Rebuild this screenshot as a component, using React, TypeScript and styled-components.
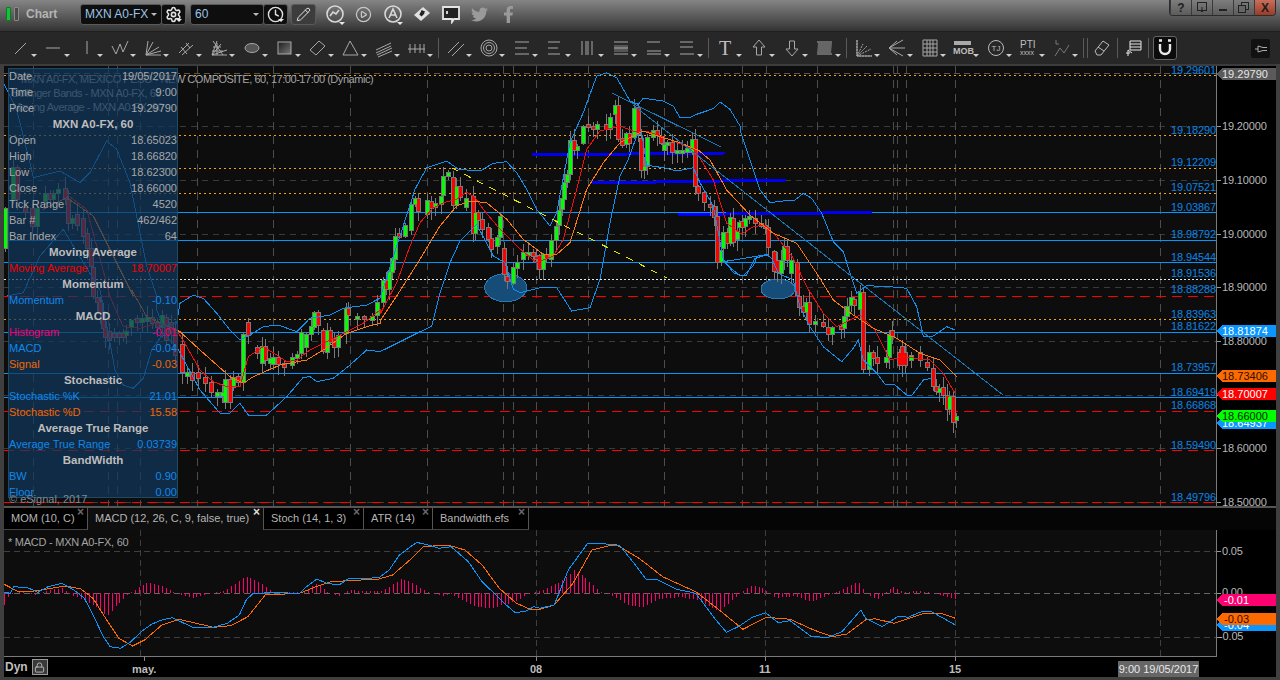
import React from "react";
import styled, { createGlobalStyle } from "styled-components";
import { Settings, Clock, Pencil, CirclePlay, Lock } from "lucide-react";
import { FaTwitter, FaFacebookF } from "react-icons/fa";

const Global = createGlobalStyle`
  html, body { margin: 0; padding: 0; background: #3c3c3c; overflow: hidden; }
  body { font-family: "Liberation Sans", Arial, sans-serif; }
`;

/* ---------- data ---------- */
type Z = [number, number, number, number];
const zm = (list: Z[], ox: number, oy: number, sy = 3) =>
  list.map(([x, a, b, g]) => [Math.round(ox + x / 3), Math.round(oy + a / sy), Math.round(oy + b / sy), g] as Z);

const candles: Z[] = [
  ...zm([[15,430,545,1],[40,305,400,1],[50,305,400,0],[75,425,437,0],[95,430,480,0],[110,430,480,1],[135,385,405,1],[150,385,400,0],[160,388,400,1],[175,372,382,1],[195,370,400,0],[205,402,472,0],[215,460,472,1],[232,448,478,0],[250,460,510,0],[262,505,545,0],[272,550,600,0],[280,605,690,0]], 0, 66),
  ...zm([[290,25,35,0],[300,35,70,0],[308,70,115,0],[315,115,140,0],[328,125,150,0],[343,133,140,0],[358,133,140,0],[370,133,140,0],[378,125,135,1],[393,92,110,1],[410,88,95,0],[425,88,95,1],[440,85,92,1],[455,85,100,0],[470,98,112,0],[485,78,110,1],[498,85,150,0],[512,100,125,0],[525,130,195,0],[545,165,245,0],[560,250,258,1],[575,250,270,0],[595,250,265,0],[615,265,280,0],[632,280,305,0],[650,310,318,1],[665,310,318,1],[675,270,335,1],[690,270,335,0],[700,265,290,1],[715,262,275,0],[730,135,275,1],[745,100,135,0],[770,175,190,0],[785,170,220,1],[795,172,210,0],[810,208,220,1],[820,203,222,1],[835,205,222,0],[852,222,230,0],[875,205,225,1],[892,195,205,1],[902,130,190,1],[918,135,172,1],[932,112,132,1],[942,70,110,1],[955,70,105,0],[968,122,182,0],[980,122,185,1],[990,122,155,0],[1003,148,172,0],[1015,138,172,1],[1037,58,130,1],[1045,58,75,0],[1070,80,88,1],[1092,80,88,0],[1115,80,90,1],[1130,38,75,1]], 0, 290),
  ...zm([[10,645,708,1],[17,645,670,0],[28,618,670,1],[37,580,618,1],[46,512,578,1],[58,505,512,0],[76,480,510,1],[94,418,492,1],[105,398,415,1],[115,398,435,0],[142,405,445,1],[152,408,425,0],[165,415,422,1],[182,392,415,1],[190,332,388,1],[205,322,330,1],[218,335,418,0],[228,362,418,1],[240,362,392,0],[257,398,422,1],[278,392,500,0],[286,440,500,1],[295,440,462,0],[305,462,490,0],[325,485,520,0],[333,520,548,0],[352,515,540,1],[361,452,512,1],[372,548,625,0],[382,632,645,0],[400,605,650,1],[410,590,605,1],[430,560,580,1],[445,560,565,1],[458,560,570,0],[468,572,580,0],[478,570,610,0],[488,568,610,1],[498,568,575,0],[514,525,580,1],[527,482,522,1],[536,435,478,1],[545,400,430,1],[553,350,398,1],[562,328,348,1],[571,226,325,1],[583,226,252,0],[592,242,252,1],[610,182,230,1],[625,178,182,0],[638,182,190,0],[650,178,188,1],[677,178,190,0],[690,155,190,1],[705,120,145,1],[715,120,218,0],[725,220,238,0],[737,205,235,1],[746,205,232,0],[762,128,212,1],[773,125,205,0],[782,218,312,0],[793,302,312,1],[800,215,300,1],[820,195,212,1],[830,195,208,0],[842,212,230,0],[852,238,252,1],[862,232,238,1],[877,232,258,0],[890,255,260,1],[905,255,260,1],[920,250,258,1],[935,222,258,1]], 380, 66),
  ...zm([[15,30,168,0],[25,172,188,0],[43,190,215,0],[60,225,230,0],[73,232,262,0],[82,262,395,0],[92,362,395,1],[100,310,355,1],[110,310,340,0],[120,265,338,1],[130,268,335,0],[140,305,328,1],[148,278,290,1],[155,275,290,0],[166,268,288,1],[178,262,268,1],[195,268,278,0],[212,282,288,0],[225,288,295,0],[235,295,352,0],[252,365,422,0],[262,392,425,0],[272,392,430,1],[282,350,390,1],[292,350,390,0],[302,392,430,1],[320,398,495,0],[328,500,532,0],[340,530,545,0],[349,520,545,1],[358,520,582,0],[376,575,580,1],[398,578,588,0],[415,595,612,0],[425,595,612,1],[452,592,598,0],[463,562,595,1],[472,530,558,1],[482,505,525,1],[492,510,525,0],[510,490,538,1],[520,490,718,0],[538,668,716,1],[550,668,685,0],[560,685,698,0],[587,685,695,1],[598,615,682,1],[607,602,618,0],[627,670,705,0],[635,652,705,0],[645,668,705,0],[663,678,690,1],[690,668,690,0],[712,700,712,0],[730,718,768,0],[738,770,782,0],[748,778,785,1],[760,775,795,0],[770,798,838,0],[778,802,838,1],[788,802,875,0],[797,860,870,1]], 690, 130),
];

const pts = (list: number[][], ox: number, oy: number, sx = 3, sy = 3) =>
  list.map(([x, y]) => `${(ox + x / sx).toFixed(1)},${(oy + y / sy).toFixed(1)}`).join(" ");

const upperBand =
  pts([[10,50],[50,130],[90,290],[100,335],[180,315],[240,350],[270,320],[320,225],[350,250],[390,350],[440,600],[470,690]], 0, 66) + " " +
  pts([[470,60],[490,110],[530,100],[540,40],[580,15],[610,25],[650,70],[690,120],[720,150],[750,135],[790,110],[835,105],[890,125],[930,85],[990,75],[1030,55],[1100,45],[1140,25]], 0, 290) + " " +
  pts([[105,370],[140,305],[200,285],[235,310],[300,315],[340,292],[380,287],[410,320],[440,370],[470,430],[510,480],[530,440],[570,230],[610,140],[650,30],[680,20],[710,35],[750,105],[775,115],[790,97],[850,105],[880,120],[900,155],[930,155],[950,145],[1000,128],[1020,108],[1050,130],[1080,180]], 380, 66) + " " +
  pts([[150,0],[170,60],[190,120],[210,180],[240,218],[300,210],[315,210],[340,190],[365,205],[395,250],[430,335],[460,365],[480,430],[500,490],[530,467],[600,470],[650,475],[680,530],[700,618],[730,618],[770,590],[795,600]], 690, 130);

const lowerBand =
  pts([[20,690],[70,680],[120,570],[190,490]], 0, 66) + " " +
  pts([[300,0],[325,130],[345,240],[370,285],[400,295],[430,265],[455,180],[490,130],[530,170],[600,300],[660,370],[690,370],[720,340],[745,375],[800,375],[860,320],[910,262],[930,260],[950,275],[1000,265],[1050,225],[1100,180],[1140,185]], 0, 290) + " " +
  pts([[155,780],[180,680],[210,590],[240,525],[290,475],[340,570],[375,590],[400,670],[420,680],[480,665],[530,665],[575,735],[630,725],[660,640],[690,470],[720,330],[745,280],[770,210],[785,200],[800,298],[850,305],[890,315],[940,305],[960,350],[1000,420],[1030,580],[1060,620],[1090,630],[1120,600],[1130,575],[1165,565]], 380, 66) + " " +
  pts([[100,395],[150,438],[170,435],[195,385],[230,375],[245,385],[265,430],[310,450],[330,530],[360,590],[400,650],[455,695],[490,655],[505,630],[520,690],[560,730],[585,762],[615,765],[650,795],[665,797],[700,750],[725,745]], 690, 130);

const redMa =
  pts([[200,385],[260,430],[290,540],[330,690]], 0, 66) + " " +
  pts([[330,20],[370,110],[420,115],[470,100],[530,120],[560,170],[600,240],[640,275],[680,290],[720,290],[745,200],[790,170],[830,195],[860,215],[890,210],[930,180],[970,160],[1030,130],[1090,100],[1140,60]], 0, 290) + " " +
  pts([[0,745],[50,650],[90,540],[120,470],[160,425],[190,410],[230,400],[260,378],[285,395],[310,430],[360,490],[410,540],[470,590],[520,570],[550,520],[590,370],[620,250],[660,195],[720,180],[760,195],[800,195],[880,225],[930,245]], 380, 66) + " " +
  pts([[15,60],[70,150],[110,280],[155,312],[190,290],[225,285],[260,320],[310,385],[350,470],[400,550],[440,590],[480,570],[510,555],[555,600],[600,690],[640,680],[720,690],[760,730],[795,790]], 690, 130);

const orangeMa =
  pts([[130,430],[200,395],[280,450],[340,570],[400,690]], 0, 66) + " " +
  pts([[395,0],[440,80],[540,125],[600,180],[690,260],[730,280],[760,260],[840,225],[920,210],[970,180],[1040,130],[1100,110],[1140,100]], 0, 290) + " " +
  pts([[0,765],[50,690],[120,580],[180,480],[230,420],[270,405],[320,410],[380,460],[430,520],[490,565],[530,565],[570,530],[620,370],[670,290],[720,230],[790,195],[850,215],[900,230],[960,255]], 380, 66) + " " +
  pts([[25,60],[60,90],[110,180],[180,255],[250,310],[320,340],[380,430],[430,510],[490,555],[550,595],[620,625],[690,670],[750,690],[800,740]], 690, 130);

const macdBlue =
  pts([[12,262],[30,265],[40,245],[80,248],[110,262],[140,245],[180,235],[215,255],[245,280],[275,340],[300,395],[320,425],[350,430],[380,410],[410,380],[440,358],[470,345],[500,338],[525,350],[560,367],[620,367],[660,355],[695,330],[715,285],[735,265],[800,263],[870,265],[890,245],[920,222],[950,235],[985,240],[1010,222],[1060,220],[1100,218],[1130,195],[1160,150],[1210,112],[1250,122],[1275,130],[1310,125],[1360,170],[1400,230],[1440,270],[1470,300],[1495,322],[1525,320],[1550,305]], 0, 505, 2.904) + " " +
  pts([[0,235],[30,225],[60,120],[100,42],[130,40],[170,48],[205,110],[225,148],[250,150],[290,178],[330,190],[370,265],[395,307],[420,290],[450,262],[478,248],[505,278],[530,272],[575,320],[610,322],[640,305],[680,240],[690,265],[725,290],[760,258],[780,262],[810,244],[830,245],[880,285]], 540, 530, 2.119);
const macdOrange =
  pts([[12,238],[50,258],[100,258],[150,250],[190,243],[235,252],[270,280],[310,345],[345,400],[385,423],[420,405],[470,360],[520,343],[570,355],[620,367],[670,362],[720,335],[770,270],[870,265],[910,248],[960,230],[1100,222],[1140,210],[1190,165],[1230,125],[1300,120],[1350,135],[1400,180],[1450,250],[1500,295],[1540,313]], 0, 505, 2.904) + " " +
  pts([[0,238],[30,225],[70,160],[110,60],[160,43],[210,85],[260,140],[330,185],[380,240],[430,298],[480,262],[530,268],[580,300],[620,320],[650,312],[690,270],[710,266],[750,280],[810,252],[850,250],[880,265]], 540, 530, 2.119);

const histKeys = [[4,-12],[9,-2],[21,2],[34,-2],[48,3],[62,5],[69,-1],[83,-7],[93,-12],[107,-23],[117,-12],[127,-2],[133,2],[148,11],[162,7],[174,1],[182,-2],[193,-5],[207,-1],[224,2],[246,17],[262,9],[272,1],[303,1],[317,10],[327,1],[339,-3],[348,3],[365,2],[382,2],[401,14],[413,10],[427,1],[441,-3],[451,-1],[475,-14],[492,-15],[517,-8],[527,-1],[540,2],[554,8],[564,14],[575,24],[587,13],[601,1],[611,-2],[630,-13],[644,-14],[658,-6],[682,-4],[700,-8],[719,-19],[733,-6],[743,2],[752,8],[764,4],[776,-5],[795,-3],[811,-9],[828,-2],[842,3],[858,12],[866,0],[877,-7],[892,6],[903,1],[917,2],[932,0],[955,-6]];
const histAt = (x: number) => {
  for (let i = 0; i < histKeys.length - 1; i++) {
    const [a, va] = histKeys[i];
    const [b, vb] = histKeys[i + 1];
    if (x >= a && x <= b) return va + ((vb - va) * (x - a)) / (b - a);
  }
  return 0;
};
const histBars: number[] = [];
for (let x = 4; x <= 955; x += 3.85) histBars.push(Math.round(x));

const seed = (i: number) => {
  const v = Math.sin(i * 12.9898) * 43758.5453;
  return v - Math.floor(v);
};

const verticals = [33, 108, 117, 140, 197, 273, 350, 427, 503, 513, 536, 588, 664, 742, 766, 817, 893, 897, 906, 955, 1160];
const gridY = [126, 180, 234, 287, 341, 395, 448, 502];
const orangeDots = [75, 135, 168, 193, 319];
const blueLines = [212, 240, 262, 332, 373, 397];
const redDashes = [296, 411, 450, 502];
const leftX = 4;
const plotR = 1216;

const levelLabels: [string, number][] = [
  ["19.29601", 74], ["19.18290", 134], ["19.12209", 166], ["19.07521", 191], ["19.03867", 211],
  ["18.98792", 238], ["18.94544", 261], ["18.91536", 277], ["18.88288", 293], ["18.83963", 318],
  ["18.81622", 330], ["18.73957", 371], ["18.69419", 396], ["18.66868", 409], ["18.59490", 449], ["18.49796", 501],
];
const axisLabels: [string, number][] = [
  ["19.20000", 130], ["19.10000", 184], ["19.00000", 238], ["18.90000", 291],
  ["18.80000", 345], ["18.60000", 452], ["18.50000", 506],
];

type Tag = { t: string; y: number; bg: string; fg: string };
const priceTags: Tag[] = [
  { t: "19.29790", y: 74, bg: "#5a5a5a", fg: "#e6e6e6" },
  { t: "18.81874", y: 331, bg: "#0a96ff", fg: "#ffffff" },
  { t: "18.73406", y: 376, bg: "#ff6a00", fg: "#2a1000" },
  { t: "18.64937", y: 423, bg: "#0a96ff", fg: "#ffffff" },
  { t: "18.70007", y: 394, bg: "#ff0000", fg: "#ffffff" },
  { t: "18.66000", y: 416, bg: "#00ff00", fg: "#002200" },
];
const macdTags: Tag[] = [
  { t: "-0.01", y: 600, bg: "#ff0070", fg: "#ffffff" },
  { t: "-0.04", y: 625, bg: "#0a96ff", fg: "#ffffff" },
  { t: "-0.03", y: 619, bg: "#ff6a00", fg: "#2a1000" },
];

type Row = { kind: "row" | "head"; l: string; v?: string; c?: string };
const rows: Row[] = [
  { kind: "row", l: "Date", v: "19/05/2017" },
  { kind: "row", l: "Time", v: "9:00" },
  { kind: "row", l: "Price", v: "19.29790" },
  { kind: "head", l: "MXN A0-FX, 60" },
  { kind: "row", l: "Open", v: "18.65023" },
  { kind: "row", l: "High", v: "18.66820" },
  { kind: "row", l: "Low", v: "18.62300" },
  { kind: "row", l: "Close", v: "18.66000" },
  { kind: "row", l: "Tick Range", v: "4520" },
  { kind: "row", l: "Bar #", v: "462/462" },
  { kind: "row", l: "Bar Index", v: "64" },
  { kind: "head", l: "Moving Average" },
  { kind: "row", l: "Moving Average", v: "18.70007", c: "#f00000" },
  { kind: "head", l: "Momentum" },
  { kind: "row", l: "Momentum", v: "-0.10", c: "#1088e8" },
  { kind: "head", l: "MACD" },
  { kind: "row", l: "Histogram", v: "-0.01", c: "#f00078" },
  { kind: "row", l: "MACD", v: "-0.04", c: "#1088e8" },
  { kind: "row", l: "Signal", v: "-0.03", c: "#f06800" },
  { kind: "head", l: "Stochastic" },
  { kind: "row", l: "Stochastic %K", v: "21.01", c: "#1088e8" },
  { kind: "row", l: "Stochastic %D", v: "15.58", c: "#f06800" },
  { kind: "head", l: "Average True Range" },
  { kind: "row", l: "Average True Range", v: "0.03739", c: "#1088e8" },
  { kind: "head", l: "BandWidth" },
  { kind: "row", l: "BW", v: "0.90", c: "#1088e8" },
  { kind: "row", l: "Floor", v: "0.00", c: "#1088e8" },
];

const tabs = [
  { t: "MOM (10, C)", w: 84 },
  { t: "MACD (12, 26, C, 9, false, true)", w: 176, on: true },
  { t: "Stoch (14, 1, 3)", w: 100 },
  { t: "ATR (14)", w: 69 },
  { t: "Bandwidth.efs", w: 96 },
];

/* ---------- styled ---------- */
const Window = styled.div`
  width: 1280px; height: 680px; display: flex; flex-direction: column;
  background: #3f3f3f; overflow: hidden;
`;
const TitleBar = styled.div`
  height: 31px; flex: none; display: flex; align-items: center; padding: 0 0 3px 6px; box-sizing: border-box;
  background: linear-gradient(#858585 0, #3d3d3d 88%, #333 100%); position: relative;
`;
const Logo = styled.div`
  width: 14px; height: 14px; display: flex; gap: 3px; margin-right: 6px;
`;
const LogoBar = styled.span<{ $on?: boolean }>`
  width: 5px; height: 14px; border-radius: 1px; box-sizing: border-box;
  background: ${(p) => (p.$on ? "#17c03a" : "#4a4a4a")};
  border: 1px solid ${(p) => (p.$on ? "#0b7d20" : "#8a8a8a")};
`;
const TitleText = styled.span`
  color: #b4b4b4; font-size: 12px; font-weight: bold; width: 54px;
`;
const Combo = styled.div<{ $w: number }>`
  width: ${(p) => p.$w}px; height: 21px; background: #0e0e0e; border: 1px solid #5a5a5a; border-radius: 3px;
  box-sizing: border-box; display: flex; align-items: center; justify-content: space-between; padding: 0 4px;
  color: #9cc4e4; font-size: 12px; flex: none;
`;
const SmallArrow = styled.span`
  width: 0; height: 0; border: 3px solid transparent; border-top: 3px solid #bbb; border-bottom: 0;
`;
const ComboBtn = styled.div<{ $light?: boolean; $arrow?: boolean }>`
  width: 25px; height: 21px; box-sizing: border-box; background: ${(p) => (p.$light ? "#3c3c3c" : "#0e0e0e")};
  border: 1px solid #5a5a5a; border-radius: 3px; display: flex; align-items: center; justify-content: center;
  color: #e2e2e2; flex: none; margin-right: 4px; margin-left: -1px; position: relative;
  &::after {
    content: ""; display: ${(p) => (p.$arrow ? "block" : "none")}; position: absolute; right: 3px; bottom: 2px;
    border: 3px solid transparent; border-top: 3px solid #e8e8e8; border-bottom: 0;
  }
`;
const BarIcon = styled.div<{ $arrow?: boolean }>`
  width: 29px; display: flex; align-items: center; justify-content: center; color: #c8c8c8; flex: none; position: relative;
  &::after {
    content: ""; display: ${(p) => (p.$arrow ? "block" : "none")}; position: absolute; right: 4px; bottom: -1px;
    border: 3px solid transparent; border-top: 3px solid #e8e8e8; border-bottom: 0;
  }
`;
const WinBtns = styled.div`
  position: absolute; right: 4px; top: 0; display: flex; height: 15px;
  border: 1px solid #2c2c2c; border-top: 0; border-radius: 0 0 4px 4px; overflow: hidden;
`;
const WinBtn = styled.div<{ $close?: boolean }>`
  width: 20px; height: 15px; display: flex; align-items: center; justify-content: center;
  font-size: 12px; font-weight: bold; color: #1d1d1d; border-left: 1px solid #3a3a3a;
  background: ${(p) => (p.$close ? "linear-gradient(#c96e5a,#9a3b2a)" : "linear-gradient(#7d7d7d,#5c5c5c)")};
`;
const DrawBar = styled.div`
  height: 33px; flex: none; box-sizing: border-box; display: flex; align-items: center; padding-left: 4px;
  background: #272727; border-top: 1px solid #1f1f1f; position: relative;
`;
const ToolBtn = styled.div<{ $noArrow?: boolean; $w?: number }>`
  width: ${(p) => p.$w ?? 33}px; height: 33px; flex: none; position: relative; display: flex; align-items: center; justify-content: center;
  color: #a8a8a8;
  &::after {
    content: ""; display: ${(p) => (p.$noArrow ? "none" : "block")}; position: absolute; left: 27px; top: 22px;
    border: 3px solid transparent; border-top: 3px solid #d0d0d0; border-bottom: 0;
  }
`;
const Sep = styled.div<{ $w?: number }>`
  width: ${(p) => p.$w ?? 6}px; height: 20px; flex: none; position: relative;
  &::before { content: ""; position: absolute; right: 0; top: 0; bottom: 0; width: 1px; background: #5a5a5a; }
`;
const Magnet = styled.div`
  width: 24px; height: 24px; margin-left: 4px; box-sizing: border-box; background: #0b0b0b; border: 1px solid #666;
  border-radius: 3px; display: flex; align-items: center; justify-content: center; flex: none;
`;
const Pin = styled.div`
  position: absolute; left: 1251px; top: 7px; width: 19px; height: 19px; background: #111; border-radius: 2px;
  display: flex; align-items: center; justify-content: center;
`;
const Divider = styled.div`
  height: 2px; flex: none; background: #3c3c3c; margin-left: 4px; margin-right: 4px;
`;
const ChartPane = styled.div`
  position: relative; height: 440px; flex: none; margin: 0 4px; background: #000; overflow: hidden;
`;
const Svg = styled.svg`
  display: block; shape-rendering: crispEdges;
`;
const TitleLines = styled.div`
  position: absolute; left: 4px; top: 6px; display: flex; flex-direction: column;
  color: #a3a3a3; font-size: 11px; line-height: 14px; white-space: nowrap; letter-spacing: -0.46px;
`;
const TitleLine = styled.span<{ $pad?: number }>`
  padding-left: ${(p) => p.$pad ?? 0}px;
`;
const DataWin = styled.div`
  position: absolute; left: 4px; top: 2px; width: 170px; height: 430px; box-sizing: border-box;
  background: rgba(18, 56, 92, 0.72); border: 1px solid #1e4a66;
  display: flex; flex-direction: column; font-size: 11px; color: #a9a9a9;
  & > :first-child { margin-top: -1px; }
`;
const DRow = styled.div<{ $c?: string }>`
  height: 16px; flex: none; display: flex; justify-content: space-between; align-items: center;
  padding: 0 0 0 0; line-height: 16px; color: ${(p) => p.$c ?? "#a9a9a9"};
`;
const DHead = styled.div`
  height: 16px; flex: none; line-height: 16px; text-align: center; font-weight: bold; color: #bdbdbd; font-size: 11.5px;
`;
const Copy = styled.div`
  position: absolute; left: 0; top: 423px; font-size: 11px; color: #7d8a95; line-height: 14px;
`;
const TabStrip = styled.div`
  height: 24px; flex: none; margin: 0 4px; background: #050505; border-top: 2px solid #555; box-sizing: border-box; display: flex;
`;
const Tab = styled.div<{ $on?: boolean; $w: number }>`
  width: ${(p) => p.$w}px; box-sizing: border-box; position: relative; flex: none; height: 22px;
  background: ${(p) => (p.$on ? "#0e0e0e" : "#000")};
  border-right: 1px solid #555; border-bottom: ${(p) => (p.$on ? "0" : "1px solid #444")};
  color: #b4b4b4; font-size: 11px; line-height: 21px; padding-left: 7px; white-space: nowrap;
`;
const TabX = styled.span<{ $on?: boolean }>`
  position: absolute; right: 3px; top: -6px; font-size: 12px; font-weight: bold; color: ${(p) => (p.$on ? "#ddd" : "#6a6a6a")};
`;
const LowerPane = styled.div`
  position: relative; height: 127px; flex: none; margin: 0 4px; background: #000;
`;
const LowerTitle = styled.div`
  position: absolute; left: 4px; top: 5px; color: #a3a3a3; font-size: 11px; line-height: 14px; letter-spacing: -0.25px;
`;
const TimeAxis = styled.div`
  position: relative; height: 20px; flex: none; margin: 0 4px; background: #000; display: flex; align-items: center;
  color: #bcbcbc; font-size: 11px; font-weight: bold;
`;
const Dyn = styled.span`
  margin-left: 1px; color: #bfbfbf; font-size: 12px; font-weight: bold;
`;
const LockBtn = styled.span`
  margin-left: 4px; width: 16px; height: 16px; box-sizing: border-box; background: #3a3a3a; border: 1px solid #999;
  display: inline-flex; align-items: center; justify-content: center; color: #bbb;
`;
const TickLabel = styled.span<{ $x: number }>`
  position: absolute; left: ${(p) => p.$x}px; top: 5px; line-height: 14px;
  &::before {
    content: ""; position: absolute; left: 50%; top: -5px; width: 1px; height: 4px; background: #888;
  }
`;
const Stamp = styled.span`
  position: absolute; left: 1114px; top: 4px; width: 81px; height: 16px; background: #666; color: #e8e8e8;
  font-size: 11px; line-height: 16px; text-align: center; font-weight: normal;
`;
const LevelText = styled.text`
  font-family: "Liberation Sans", Arial, sans-serif; font-size: 11px; fill: #0a84e6; text-anchor: end; letter-spacing: -0.1px;
`;
const AxisText = styled.text`
  font-family: "Liberation Sans", Arial, sans-serif; font-size: 11px; fill: #b8b8b8; letter-spacing: -0.15px;
`;
const TagText = styled.text`
  font-family: "Liberation Sans", Arial, sans-serif; font-size: 11px;
`;
const IconText = styled.text`
  font-family: "Liberation Sans", Arial, sans-serif; fill: #bdbdbd;
`;
const SerifT = styled.text`
  font-family: "Liberation Serif", serif; font-size: 20px; fill: #bdbdbd;
`;

/* ---------- icons ---------- */
const I: React.FC<{ children: React.ReactNode }> = ({ children }) => (
  <svg width="20" height="20" viewBox="0 0 20 20" fill="none" stroke="currentColor" strokeWidth="1">{children}</svg>
);
const Grad = () => (
  <linearGradient id="gg" x1="0" y1="0" x2="1" y2="1"><stop offset="0" stopColor="#1c1c1c" /><stop offset="1" stopColor="#777" /></linearGradient>
);
const drawTools: React.ReactNode[] = [
  <I><path d="M4 16 L15 5" /></I>,
  <I><path d="M2 10 H16" /></I>,
  <I><path d="M10 3 V16" /></I>,
  <I><path d="M2 8 L6 16 L10 6 L13 14 L18 3" /></I>,
  <I><path d="M3 17 L5 3 M3 17 L10 4 M3 17 L16 9 M3 17 L18 13 M3 17 H18" /></I>,
  <I><path d="M3 15 L13 5 M6 17 L17 7 M5 9 L11 16 M10 5 L14 10" /></I>,
  <I><path d="M4 3 L14 17 M3 17 L8 3 M3 17 L12 6 M3 17 L18 12 M3 17 H18 M4 9 H12 M3 13 L14 13 M8 5 L8 17" /></I>,
  <I><ellipse cx="10" cy="10" rx="7" ry="4.5" fill="#555" /></I>,
  <I><Grad /><rect x="3" y="4" width="13" height="12" fill="url(#gg)" /></I>,
  <I><path d="M2 12 L11 3 L17 8 L8 17 Z" /></I>,
  <I><path d="M2 17 L9 3 L17 17 Z" /></I>,
  <I><path d="M2 12 L17 5 M2 15 L17 8 M3 17 L18 10 M4 19 L18 13" /></I>,
  <I><path d="M1 11 H18 M3 6 V15 M8 6 V15 M13 6 V15 M17 6 V15" /></I>,
  null,
  <I><path d="M2 15 L13 4 M6 18 L18 6" /></I>,
  <I><circle cx="10" cy="10" r="8" /><circle cx="10" cy="10" r="5.5" /><circle cx="10" cy="10" r="3" /></I>,
  <I><path d="M3 4 H17 M3 10 H15 M3 16 H17" /></I>,
  <I><path d="M3 4 H15 M3 10 H13 M3 16 H15" /></I>,
  <I><path d="M4 3 V17 M8 3 V17 M10 3 V17 M14 3 V17" /></I>,
  <I><rect x="3" y="7" width="14" height="7" fill="#555" stroke="none" /><path d="M3 4 H17 M3 10 H17 M3 16 H17" /></I>,
  <I><path d="M3 4 H16 M3 13 H17 M3 16 H17" /></I>,
  <I><path d="M3 4 H16 M3 9 H16 M3 16 H17" /></I>,
  null,
  <svg width="20" height="20" viewBox="0 0 20 20"><SerifT x="3" y="17">T</SerifT></svg>,
  <I><path d="M10 2 L16 9 H12.5 V17 H7.5 V9 H4 Z" /></I>,
  <I><path d="M10 18 L16 11 H12.5 V3 H7.5 V11 H4 Z" /></I>,
  <I><path d="M2 4 H17 M2 16 H17" /><path d="M3 5 H17 L16 15 H2 Z" fill="#666" stroke="none" /></I>,
  null,
  <I><path d="M3 2 V18 H18 M3 18 L9 6 M3 18 L13 8 M3 18 L17 11" strokeDasharray="2 1" /><path d="M3 2 V18 H18" /></I>,
  <I><path d="M2 10 L16 2 M2 10 L18 10 M2 10 L16 18 M2 10 L10 3 M2 10 L10 17" /></I>,
  <I><path d="M3 2 H17 V18 H3 Z M3 6 H17 M3 10 H17 M3 14 H17 M7 2 V18 M10 2 V18 M13 2 V18" /></I>,
  <svg width="24" height="20" viewBox="0 0 24 20"><rect x="3" y="3" width="17" height="4" fill="#aaa" /><IconText x="2" y="16" fontSize="9" fontWeight="bold">MOB</IconText></svg>,
  <svg width="20" height="20" viewBox="0 0 20 20" fill="none"><circle cx="10" cy="10" r="7.5" stroke="#bbb" /><IconText x="5.5" y="13" fontSize="8" stroke="none">TJ</IconText></svg>,
  <svg width="24" height="20" viewBox="0 0 24 20"><IconText x="3" y="10" fontSize="10">PTI</IconText><IconText x="3" y="17" fontSize="7">xxxx</IconText></svg>,
  <I><path d="M4 2 V6 H7 M3 18 L8 10 L12 15 L17 7" stroke="#777" /></I>,
  null,
  <I><path d="M3 13 L11 3 L17 7 L9 17 H5 Z M6 9 L12 13" stroke="#bbb" /></I>,
  null,
  <I><path d="M7 3 H18 V12 H7 Z M7 6 H18 M7 9 H18 M5 12 L9 15 M5 12 V18 M3 15 H7" stroke="#e8e8e8" /></I>,
];

const ChartClock = () => (
  <svg width="20" height="20" viewBox="0 0 20 20" fill="none" stroke="#d8d8d8" strokeWidth="1.6"><circle cx="10" cy="10" r="8" /><path d="M5 12 L8 8 L11 10 L14 6" /></svg>
);
const AIcon = () => (
  <svg width="20" height="20" viewBox="0 0 20 20" fill="none" stroke="#d8d8d8" strokeWidth="1.6"><circle cx="10" cy="10" r="8" /><path d="M6 14 L10 5 L14 14 M7.5 11 H12.5" /></svg>
);
const TagIcon = () => (
  <svg width="20" height="20" viewBox="0 0 20 20" fill="#e0e0e0"><path d="M2 11 L11 3 L18 9 L9 17 Z" /><path d="M8 11 L12 8 L10 7 Z M12 9 L9 12" stroke="#222" strokeWidth="1.5" /></svg>
);
const Bubble = () => (
  <svg width="20" height="20" viewBox="0 0 20 20" fill="#222" stroke="#e4e4e4" strokeWidth="1.8"><path d="M2 3 H18 V15 H13 L11 18 V15 H2 Z" /><path d="M6 7 V10" /></svg>
);

/* ---------- charts ---------- */
const MainChart = () => (
  <Svg width={1272} height={440} viewBox="4 66 1272 440">
    <rect x={leftX} y={66} width={plotR - leftX} height={440} fill="#0d0d0d" />
    {gridY.map((y) => <line key={y} x1={leftX} x2={plotR} y1={y + 0.5} y2={y + 0.5} stroke="#3a3a3a" strokeDasharray="6 5" />)}
    {verticals.map((x) => <line key={x} x1={x + 0.5} x2={x + 0.5} y1={66} y2={506} stroke="#4c4c4c" strokeDasharray="8 6" />)}
    <line x1={leftX} x2={plotR} y1={73.5} y2={73.5} stroke="#555" strokeDasharray="6 4" />
    {orangeDots.map((y) => <line key={y} x1={leftX} x2={plotR} y1={y + 0.5} y2={y + 0.5} stroke="#f0a020" strokeDasharray="2 3" />)}
    <line x1={leftX} x2={plotR} y1={279.5} y2={279.5} stroke="#e8e8e8" strokeDasharray="2 2" />
    {blueLines.map((y) => <line key={y} x1={leftX} x2={plotR} y1={y + 0.5} y2={y + 0.5} stroke="#0098ff" />)}
    {redDashes.map((y) => <line key={y} x1={leftX} x2={plotR} y1={y + 0.5} y2={y + 0.5} stroke="#ff0000" strokeDasharray="10 6" />)}
    <ellipse cx={505.7} cy={287.7} rx={21} ry={14} fill="#164d78" stroke="#2a78b4" />
    <ellipse cx={778} cy={289} rx={17} ry={10} fill="#164d78" stroke="#2a78b4" />
    <line x1={532} x2={725} y1={155} y2={153} stroke="#0000ee" strokeWidth={3} />
    <line x1={592} x2={786} y1={183} y2={180} stroke="#0000ee" strokeWidth={3} />
    <line x1={678} x2={872} y1={214.5} y2={212.5} stroke="#0000ee" strokeWidth={3} />
    {candles.map(([x, a, b], i) => {
      const up = 2 + seed(i) * 10;
      const dn = 2 + seed(i + 300) * 10;
      return <line key={`w${i}`} x1={x + 0.5} x2={x + 0.5} y1={a - up} y2={b + dn} stroke="#7a7a7a" />;
    })}
    {candles.map(([x, a, b], i) => (
      <rect key={`o${i}`} x={x - 2} y={a - 1} width={5} height={Math.max(b - a, 2) + 2} fill="#7a7a7a" />
    ))}
    {candles.map(([x, a, b, g], i) => (
      <rect key={`c${i}`} x={x - 1} y={a} width={3} height={Math.max(b - a, 2)} fill={g ? "#00ff00" : "#ff0000"} />
    ))}
    <polyline points={redMa} fill="none" stroke="#f01010" />
    <polyline points={orangeMa} fill="none" stroke="#ff7a10" />
    <polyline points={upperBand} fill="none" stroke="#1090f0" />
    <polyline points={lowerBand} fill="none" stroke="#1090f0" />
    <line x1={612} y1={93} x2={721} y2={147} stroke="#1878b8" />
    <line x1={633} y1={105} x2={1003} y2={395} stroke="#1878b8" />
    <line x1={452} y1={168} x2={667} y2={278} stroke="#e6e600" strokeDasharray="7 7" />
    {levelLabels.map(([t, y]) => <LevelText key={t} x={1216} y={y}>{t}</LevelText>)}
    <line x1={1216.5} x2={1216.5} y1={66} y2={506} stroke="#7a7a7a" />
    {gridY.map((y) => <line key={`t${y}`} x1={1217} x2={1221} y1={y + 0.5} y2={y + 0.5} stroke="#999" />)}
    {axisLabels.map(([t, y]) => <AxisText key={t} x={1222} y={y}>{t}</AxisText>)}
    {priceTags.map((p) => (
      <g key={p.t}>
        <polygon points={`1216,${p.y} 1222,${p.y - 6} 1276,${p.y - 6} 1276,${p.y + 6} 1222,${p.y + 6}`} fill={p.bg} />
        <TagText x={1222} y={p.y + 4} fill={p.fg}>{p.t}</TagText>
      </g>
    ))}
  </Svg>
);

const LowerChart = () => (
  <Svg width={1272} height={127} viewBox="4 530 1272 127">
    <rect x={4} y={530} width={1212} height={126} fill="#0d0d0d" />
    {[551, 593, 637].map((y) => <line key={y} x1={4} x2={1216} y1={y + 0.5} y2={y + 0.5} stroke={y === 593 ? "#666" : "#3f3f3f"} strokeDasharray="6 4" />)}
    {[140, 536, 765, 955, 1160].map((x) => <line key={x} x1={x + 0.5} x2={x + 0.5} y1={530} y2={656} stroke="#3f3f3f" strokeDasharray="6 4" />)}
    {histBars.map((x, i) => {
      const v = histAt(x);
      return <line key={i} x1={x + 0.5} x2={x + 0.5} y1={593} y2={593 - v} stroke="#ff0070" />;
    })}
    <polyline points={macdOrange} fill="none" stroke="#ff6a00" />
    <polyline points={macdBlue} fill="none" stroke="#0a96ff" />
    <line x1={4} x2={1216} y1={656.5} y2={656.5} stroke="#7a7a7a" />
    <line x1={1216.5} x2={1216.5} y1={530} y2={657} stroke="#7a7a7a" />
    {[551, 593, 637].map((y) => <line key={`k${y}`} x1={1217} x2={1221} y1={y + 0.5} y2={y + 0.5} stroke="#999" />)}
    <AxisText x={1222} y={555}>0.05</AxisText>
    <AxisText x={1222} y={596}>0.00</AxisText>
    <AxisText x={1219} y={640}>-0.05</AxisText>
    {macdTags.map((p) => (
      <g key={p.t}>
        <polygon points={`1216,${p.y} 1222,${p.y - 6} 1276,${p.y - 6} 1276,${p.y + 6} 1222,${p.y + 6}`} fill={p.bg} />
        <TagText x={1224} y={p.y + 4} fill={p.fg}>{p.t}</TagText>
      </g>
    ))}
  </Svg>
);

export default function App() {
  return (
    <Window>
      <Global />
      <TitleBar>
        <Logo><LogoBar $on /><LogoBar /></Logo>
        <TitleText>Chart</TitleText>
        <Combo $w={82}>MXN A0-FX<SmallArrow /></Combo>
        <ComboBtn $arrow><Settings size={17} strokeWidth={2.2} /></ComboBtn>
        <Combo $w={74}>60<SmallArrow /></Combo>
        <ComboBtn $arrow><Clock size={17} strokeWidth={2} /></ComboBtn>
        <ComboBtn $light><Pencil size={15} strokeWidth={1.6} /></ComboBtn>
        <BarIcon $arrow><ChartClock /></BarIcon>
        <BarIcon><CirclePlay size={17} strokeWidth={1.7} /></BarIcon>
        <BarIcon $arrow><AIcon /></BarIcon>
        <BarIcon><TagIcon /></BarIcon>
        <BarIcon><Bubble /></BarIcon>
        <BarIcon><FaTwitter size={17} color="#9a9a9a" /></BarIcon>
        <BarIcon><FaFacebookF size={17} color="#9a9a9a" /></BarIcon>
        <WinBtns>
          <WinBtn>?</WinBtn>
          <WinBtn><svg width="12" height="11" viewBox="0 0 12 11" fill="none" stroke="#222"><rect x="1.5" y="0.5" width="9" height="8" /><path d="M6 5 V10 M4 8 L6 10 L8 8" /></svg></WinBtn>
          <WinBtn><svg width="10" height="10" viewBox="0 0 10 10"><rect x="1" y="6" width="8" height="2" fill="#222" /></svg></WinBtn>
          <WinBtn><svg width="12" height="11" viewBox="0 0 12 11" fill="none" stroke="#222"><rect x="3.5" y="0.5" width="7" height="7" /><rect x="0.5" y="3.5" width="7" height="7" fill="#666" /></svg></WinBtn>
          <WinBtn $close>X</WinBtn>
        </WinBtns>
      </TitleBar>
      <DrawBar>
        {drawTools.slice(0, 36).map((n, i) =>
          n === null ? <Sep key={i} /> : <ToolBtn key={i}>{n}</ToolBtn>
        )}
        <Sep $w={4} />
        <ToolBtn $noArrow $w={28}>{drawTools[36]}</ToolBtn>
        <Sep $w={2} />
        <ToolBtn $noArrow $w={29}>{drawTools[38]}</ToolBtn>
        <Sep $w={2} />
        <Magnet>
          <svg width="20" height="20" viewBox="0 0 20 20" fill="none" stroke="#e8e8e8" strokeWidth="2.4"><path d="M5 6 V11 A5 5 0 0 0 15 11 V6" /><path d="M4 2.5 H7 M13 2.5 H16" /></svg>
        </Magnet>
        <Pin>
          <svg width="14" height="10" viewBox="0 0 14 10" fill="none" stroke="#aaa"><path d="M1 5 H4 M4 2 V8 L9 6.5 H13 M4 2 L9 3.5 H13" /></svg>
        </Pin>
      </DrawBar>
      <Divider />
      <ChartPane>
        <MainChart />
        <TitleLines>
          <TitleLine $pad={13}>MXN A0-FX, MEXICO PESO - NEW COMPOSITE, 60, 17:00-17:00 (Dynamic)</TitleLine>
          <TitleLine $pad={4}>Bollinger Bands - MXN A0-FX, 60</TitleLine>
          <TitleLine $pad={4}>Moving Average - MXN A0-FX, 60</TitleLine>
        </TitleLines>
        <DataWin>
          {rows.map((r, i) =>
            r.kind === "head" ? (
              <DHead key={i}>{r.l}</DHead>
            ) : (
              <DRow key={i} $c={r.c}><span>{r.l}</span><span>{r.v}</span></DRow>
            )
          )}
          <Copy>© eSignal, 2017</Copy>
        </DataWin>
      </ChartPane>
      <TabStrip>
        {tabs.map((t) => (
          <Tab key={t.t} $w={t.w} $on={t.on}>{t.t}<TabX $on={t.on}>×</TabX></Tab>
        ))}
      </TabStrip>
      <LowerPane>
        <LowerChart />
        <LowerTitle>* MACD - MXN A0-FX, 60</LowerTitle>
      </LowerPane>
      <TimeAxis>
        <Dyn>Dyn</Dyn>
        <LockBtn><Lock size={11} /></LockBtn>
        <TickLabel $x={128}>may.</TickLabel>
        <TickLabel $x={526}>08</TickLabel>
        <TickLabel $x={755}>11</TickLabel>
        <TickLabel $x={945}>15</TickLabel>
        <Stamp>9:00 19/05/2017</Stamp>
      </TimeAxis>
    </Window>
  );
}
